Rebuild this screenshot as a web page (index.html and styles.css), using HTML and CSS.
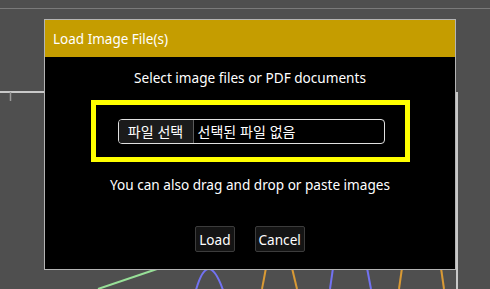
FILE: index.html
```html
<!DOCTYPE html>
<html lang="ko">
<head>
    <meta charset="UTF-8">
    <meta name="viewport" content="width=device-width, initial-scale=1.0">
    <title>Load Image File(s)</title>
    <link rel="stylesheet" href="styles.css">
</head>
<body>
    <!-- Canvas drawing behind the modal -->
    <svg class="canvas" width="490" height="289" viewBox="0 0 490 289">
        <line x1="0" y1="8.5" x2="490" y2="8.5" stroke="#7a7a7a" stroke-width="1"/>
        <line x1="0" y1="92" x2="44" y2="92" stroke="#c9c9c9" stroke-width="2"/>
        <line x1="10.5" y1="92" x2="10.5" y2="101" stroke="#9a9a9a" stroke-width="1.5"/>
        <line x1="457" y1="92" x2="457" y2="289" stroke="#c9c9c9" stroke-width="2"/>
        <line x1="98" y1="289" x2="160" y2="268" stroke="#98e098" stroke-width="2"/>
        <path d="M196 290 Q208 248 223 290" fill="none" stroke="#7272f2" stroke-width="2"/>
        <line x1="266" y1="268" x2="262" y2="289" stroke="#d99a35" stroke-width="2"/>
        <line x1="292" y1="268" x2="297" y2="289" stroke="#d99a35" stroke-width="2"/>
        <line x1="333" y1="268" x2="330" y2="289" stroke="#7272f2" stroke-width="2"/>
        <line x1="367" y1="268" x2="371" y2="289" stroke="#7272f2" stroke-width="2"/>
        <line x1="402" y1="268" x2="399" y2="289" stroke="#d99a35" stroke-width="2"/>
        <line x1="441" y1="268" x2="444" y2="289" stroke="#d99a35" stroke-width="2"/>
    </svg>

    <div class="dialog">
        <div class="dialog-title">Load Image File(s)</div>
        <div class="dialog-body">
            <p class="dialog-text">Select image files or PDF documents</p>
            <div class="drop-zone">
                <div class="file-input">
                    <span class="file-button">파일 선택</span>
                    <span class="file-name">선택된 파일 없음</span>
                </div>
            </div>
            <p class="dialog-text hint">You can also drag and drop or paste images</p>
            <div class="dialog-buttons">
                <button type="button">Load</button>
                <button type="button">Cancel</button>
            </div>
        </div>
    </div>
</body>
</html>
```

FILE: styles.css
```css
/* Resetting styles */
* {
    margin: 0;
    padding: 0;
    box-sizing: border-box;
}

body {
    width: 490px;
    height: 289px;
    overflow: hidden;
    position: relative;
    background-color: #4f4f4f;
    color: #fff;
    font-family: "Noto Sans", "Noto Sans CJK KR", sans-serif;
    font-size: 13.6px;
}

.canvas {
    position: absolute;
    top: 0;
    left: 0;
}

.dialog {
    position: absolute;
    top: 19px;
    left: 44px;
    width: 412px;
    height: 251px;
    border: 1px solid #b4b4b4;
    background-color: #000;
    display: flex;
    flex-direction: column;
}

.dialog-title {
    height: 37px;
    background-color: #c59d00;
    padding-left: 8px;
    display: flex;
    align-items: center;
    font-size: 13.5px;
}

.dialog-body {
    flex: 1;
    display: flex;
    flex-direction: column;
    align-items: center;
    padding-top: 11px;
}

.dialog-text {
    line-height: 20px;
    text-align: center;
}

.drop-zone {
    width: 319px;
    height: 62px;
    margin-top: 12px;
    border: 5px solid #ffff00;
    display: flex;
    align-items: center;
    justify-content: center;
    padding-left: 2px;
}

.file-input {
    width: 267px;
    height: 25px;
    border: 1.5px solid #e0e0e0;
    border-radius: 4px;
    display: flex;
    align-items: stretch;
    overflow: hidden;
    font-family: "Noto Sans CJK KR", sans-serif;
    font-size: 14px;
}

.file-button {
    width: 75px;
    background-color: #1b1b1b;
    border-right: 1px solid #5a5a5a;
    display: flex;
    align-items: center;
    justify-content: center;
}

.file-name {
    display: flex;
    align-items: center;
    padding-left: 4px;
}

.hint {
    margin-top: 13px;
}

.dialog-buttons {
    display: flex;
    gap: 20px;
    margin-top: 31px;
}

.dialog-buttons button {
    height: 26px;
    padding: 0 3px;
    background-color: #141414;
    color: #fff;
    border: 1px solid #3c3c3c;
    border-radius: 2px;
    font-family: "Noto Sans", sans-serif;
    font-size: 13.6px;
    cursor: pointer;
}
```
